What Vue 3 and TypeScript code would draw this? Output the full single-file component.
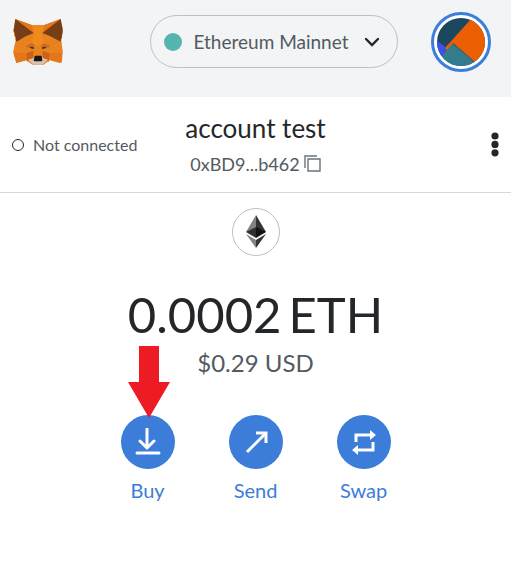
<script setup lang="ts">
interface Action {
  id: 'buy' | 'send' | 'swap'
  label: string
}

const actions: Action[] = [
  { id: 'buy', label: 'Buy' },
  { id: 'send', label: 'Send' },
  { id: 'swap', label: 'Swap' },
]
</script>

<template>
  <div class="wallet">
    <header class="topbar">
      <a class="logo" href="#" aria-label="Home">
        <svg viewBox="36 54 156 144" width="52" height="48" aria-hidden="true">
          <path fill="#e8821e" d="M46 57 95 75h38l49-18 7 35-5 29 4 34-9 34-30-8-18 13H97l-18-13-30 8-9-34 7-34-7-29z" />
          <path fill="#f08a1c" d="M95 75h38l-8 26 9 31-20 5-20-5 9-31z" />
          <path fill="#e2761b" d="M46 57 95 75l6 23zM182 57l-49 18-6 23zM40 158l39-3 3 24-33 10zM188 158l-39-3 3 24 33 10z" />
          <path fill="#763d16" d="M46 57 101 99 77 109 50 125l-3-6 1-7-4-5 1-6-4-9z" />
          <path fill="#763d16" d="M182 57 127 99l24 10 31 16 0-6 4-7-1-5 2-6 1-13z" />
          <path fill="#e8821e" d="m46 130 32 3 4 27-42-3zM182 130l-32 3-4 27 42-3z" />
          <path fill="#cd6116" d="m79 160 22-8-2 22-18 11zM149 160l-22-8 2 22 18 11z" />
          <path fill="#d2691b" d="m78 138 15-8 9 2 2 14-24-4zM150 138l-15-8-9 2-2 14 24-4z" />
          <path fill="#d7c1b3" d="m84 179 19-6h22l19 6-17 15h-26z" />
          <path fill="#233447" d="m90 140 10 1 2 6-10-2zM138 140l-10 1-2 6 10-2z" />
          <path fill="#161616" d="m104 169 3-2h15l3 2 2 13-3 2h-20l-3-2z" />
        </svg>
      </a>
      <button class="network" type="button">
        <span class="network-dot"></span>
        <span>Ethereum Mainnet</span>
        <svg class="chevron" viewBox="0 0 16 10" width="16" height="10" aria-hidden="true">
          <path d="m2 2 6 6 6-6" />
        </svg>
      </button>
      <button class="avatar" type="button" aria-label="Accounts">
        <svg viewBox="0 0 48 48" width="48" height="48" aria-hidden="true">
          <clipPath id="avatar-clip"><circle cx="24" cy="24" r="24" /></clipPath>
          <g clip-path="url(#avatar-clip)">
            <path fill="#1b485f" d="M0 0h48v48H0z" />
            <path fill="#3f50e5" d="M-2 21 12 32 2 44z" />
            <path fill="#347b8e" d="m15 25 26 22-18 6L2 42z" />
            <path fill="#eb5f02" d="M34 1 8 30l2 2 6-7 22 19 14-4V0z" />
          </g>
        </svg>
      </button>
    </header>

    <section class="account">
      <div class="status"><span class="status-ring"></span>Not connected</div>
      <button class="identity" type="button">
        <span class="name">account test</span>
        <span class="address">
          0xBD9...b462
          <svg viewBox="0 0 17 17" width="17" height="17" aria-hidden="true">
            <path d="M1 13V1h12M4 4h12v12H4z" />
          </svg>
        </span>
      </button>
      <button class="menu" type="button" aria-label="Account options">
        <svg viewBox="0 0 8 26" width="8" height="26" aria-hidden="true">
          <circle cx="4" cy="4" r="3.6" /><circle cx="4" cy="12.4" r="3.6" /><circle cx="4" cy="20.8" r="3.6" />
        </svg>
      </button>
    </section>

    <main class="overview">
      <div class="token">
        <svg viewBox="0 0 22 34" width="22" height="34" aria-hidden="true">
          <path fill="#828384" d="M11 0v17L1 17z" />
          <path fill="#343434" d="M11 0v17l10 0z" />
          <path fill="#2f3030" d="m1 17 10-5v11z" />
          <path fill="#131313" d="m21 17-10-5v11z" />
          <path fill="#828384" d="m1 19 10 6v8z" />
          <path fill="#343434" d="m21 19-10 6v8z" />
        </svg>
      </div>
      <h1 class="balance"><span>0.0002</span><span>ETH</span></h1>
      <p class="fiat">$0.29 USD</p>
      <nav class="actions" aria-label="Wallet actions">
        <button v-for="action in actions" :key="action.id" class="action" type="button">
          <span class="disc">
            <svg v-if="action.id === 'buy'" viewBox="0 0 28 28" width="28" height="28" aria-hidden="true">
              <path d="M13 1v18M6 13l7 7 7-7" />
              <path d="M3 25h22" />
            </svg>
            <svg v-else-if="action.id === 'send'" class="square" viewBox="0 0 28 28" width="28" height="28" aria-hidden="true">
              <path d="M5 24 23 6" /><path d="M14 5h10v10" />
            </svg>
            <svg v-else class="square" viewBox="0 0 28 28" width="28" height="28" aria-hidden="true">
              <path d="M6 14V7h15M23 14v8H8" />
              <path class="head" d="m20 2 6 5-6 5zM8 17l-6 5 6 5z" />
            </svg>
          </span>
          <span>{{ action.label }}</span>
          <svg v-if="action.id === 'buy'" class="pointer" viewBox="0 0 42 72" width="42" height="72" aria-hidden="true">
            <path d="M11 0h20v36h11L21 72 0 36h11z" />
          </svg>
        </button>
      </nav>
    </main>
  </div>
</template>

<style>
body {
  margin: 0;
  background: #fff;
}
</style>

<style scoped>
.wallet {
  font-family: Lato, 'Liberation Sans', sans-serif;
  color: #24272a;
}

button {
  margin: 0;
  padding: 0;
  border: 0;
  background: none;
  color: inherit;
  font: inherit;
  cursor: pointer;
}

svg {
  display: block;
}

.topbar {
  display: flex;
  align-items: flex-start;
  justify-content: space-between;
  padding: 12px 20px 25px 12px;
  background: #f2f4f6;
}

.logo {
  padding-top: 6px;
}

.network {
  display: flex;
  align-items: center;
  gap: 12px;
  box-sizing: border-box;
  height: 53px;
  margin: 3px 0 0 53px;
  padding: 0 17px 0 13px;
  border: 1px solid #bbc0c5;
  border-radius: 27px;
  color: #535a61;
  font-size: 19px;
}

.network-dot {
  width: 18px;
  height: 18px;
  border-radius: 50%;
  background: #56b5af;
}

.chevron {
  margin-left: 4px;
  fill: none;
  stroke: #24272a;
  stroke-width: 2.4;
  stroke-linecap: round;
}

.avatar {
  padding: 3px;
  border: 3px solid #3b7fda;
  border-radius: 50%;
  background: #fff;
}

.account {
  display: grid;
  grid-template-columns: 1fr auto 1fr;
  align-items: center;
  box-sizing: border-box;
  height: 96px;
  padding: 0 12px;
  border-bottom: 1px solid #d6d9dc;
}

.status {
  display: flex;
  align-items: center;
  gap: 9px;
  color: #535a61;
  font-size: 16px;
}

.status-ring {
  box-sizing: border-box;
  width: 12px;
  height: 12px;
  border: 1px solid #24272a;
  border-radius: 50%;
}

.identity {
  display: flex;
  flex-direction: column;
  align-items: center;
  gap: 8px;
}

.name {
  font-size: 26px;
  line-height: 30px;
}

.address {
  display: flex;
  align-items: center;
  gap: 4px;
  color: #535a61;
  font-size: 18px;
  line-height: 26px;
}

.address svg {
  fill: none;
  stroke: #6a737d;
  stroke-width: 1.4;
}

.menu {
  justify-self: end;
  fill: #24272a;
}

.overview {
  display: flex;
  flex-direction: column;
  align-items: center;
  padding-top: 15px;
}

.token {
  display: grid;
  place-items: center;
  box-sizing: border-box;
  width: 48px;
  height: 48px;
  border: 1px solid #bbc0c5;
  border-radius: 50%;
}

.balance {
  display: flex;
  gap: 7px;
  margin: 28px 0 0;
  font-size: 49px;
  font-weight: 400;
  line-height: 60px;
}

.fiat {
  margin: 4px 0 0;
  color: #535a61;
  font-size: 24px;
  line-height: 30px;
}

.actions {
  display: flex;
  gap: 54px;
  padding-top: 37px;
}

.action {
  position: relative;
  display: flex;
  flex-direction: column;
  align-items: center;
  gap: 8px;
  width: 54px;
  color: #3b7dd8;
  font-size: 20px;
  line-height: 26px;
}

.disc {
  display: grid;
  place-items: center;
  width: 54px;
  height: 54px;
  border-radius: 50%;
  background: #3b7dd8;
}

.disc path {
  fill: none;
  stroke: #fff;
  stroke-width: 3;
  stroke-linecap: round;
  stroke-linejoin: round;
}

.disc .square path {
  stroke-linecap: butt;
  stroke-linejoin: miter;
}

.disc .square .head {
  fill: #fff;
  stroke: none;
}

.pointer {
  position: absolute;
  top: -69px;
  left: 7px;
  fill: #ed1c24;
}
</style>
